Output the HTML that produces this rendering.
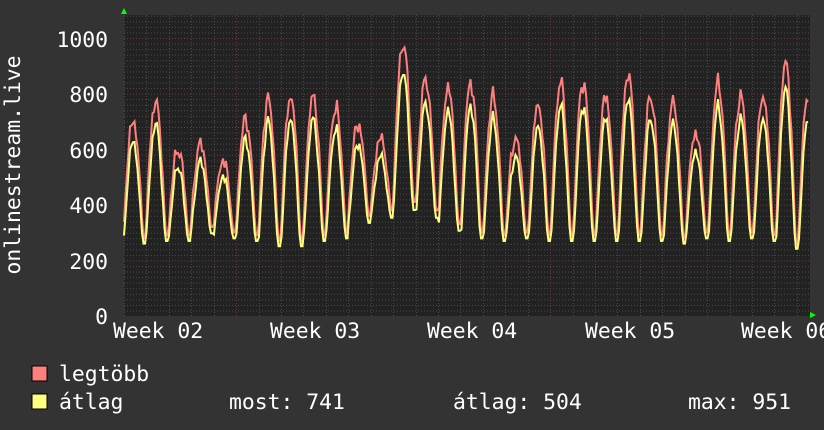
<!DOCTYPE html>
<html><head><meta charset="utf-8"><style>
body{margin:0;background:#333;width:824px;height:430px;overflow:hidden;font-family:"DejaVu Sans Mono","Liberation Mono",monospace;color:#fff}
svg{position:absolute;left:0;top:0}
</style></head><body>
<svg width="824" height="430" xmlns="http://www.w3.org/2000/svg" font-family="DejaVu Sans Mono, Liberation Mono, monospace">
<rect width="824" height="430" fill="#333"/>
<rect x="124" y="15" width="686" height="301" fill="#222"/>
<g id="grid"></g>
<g id="lines"></g>
<polygon points="121,14 127,14 124,8" fill="#0f0"/>
<polygon points="810,312 810,318 816,315" fill="#0f0"/>
<g fill="#fff" font-size="21.4" text-anchor="end">
<text x="108" y="47">1000</text><text x="108" y="102">800</text><text x="108" y="158">600</text>
<text x="108" y="213">400</text><text x="108" y="269">200</text><text x="108" y="324">0</text>
</g>
<g fill="#fff" font-size="21.4">
<text x="113" y="338">Week 02</text><text x="270" y="338">Week 03</text><text x="427" y="338">Week 04</text>
<text x="585" y="338">Week 05</text><text x="741" y="338">Week 06</text>
</g>
<text transform="translate(20,165) rotate(-90)" font-size="21.4" fill="#fff" text-anchor="middle">onlinestream.live</text>
<rect x="32" y="366" width="15" height="15" fill="#ff7f7f" stroke="#000"/>
<rect x="32" y="394" width="15" height="15" fill="#ffff7f" stroke="#000"/>
<g font-size="21.4" fill="#fff">
<text x="59" y="381">legtöbb</text>
<text x="59" y="409">átlag</text>
<text x="229" y="409">most: 741</text>
<text x="453" y="409">átlag: 504</text>
<text x="688" y="409">max: 951</text>
</g>
</svg>
<script>
var ns="http://www.w3.org/2000/svg";
var g=document.getElementById('grid'),L=document.getElementById('lines');
function line(x1,y1,x2,y2,c){var l=document.createElementNS(ns,'line');l.setAttribute('x1',x1);l.setAttribute('y1',y1);l.setAttribute('x2',x2);l.setAttribute('y2',y2);l.setAttribute('stroke',c);l.setAttribute('stroke-dasharray','1,2');g.appendChild(l);}
function Y(v){return 316-v*0.278;}
for(var v=20;v<=1080;v+=20){var y=Y(v);if(y<15)break;line(124,y+.5,810,y+.5,v%200==0?'#6a3a3a':'#4a4a4a');}
for(var x=124;x<810;x+=22.43){var d=Math.round((x-124)/22.43);line(Math.round(x)+.5,15,Math.round(x)+.5,316,(d%7==5)?'#6a3a3a':'#4a4a4a');}
var peaks=[700,770,600,620,560,710,780,790,790,750,690,640,980,850,820,840,790,640,760,840,840,790,870,790,770,660,840,790,790,910,800];
var troughs=[280,290,290,320,300,290,270,270,290,300,360,380,410,380,330,300,290,300,290,290,290,290,290,290,280,300,290,300,290,260,260];
var pm="",pa="";
for(var x=124;x<=808;x+=1.5){
 var t=(x-124)/22.5+0.03; var d=Math.floor(t),ph=t-d; if(ph<0){ph+=1;d-=1;}
 var di=Math.max(0,Math.min(d,30));
 var pk=peaks[di],tr=troughs[di];
 var f=Math.pow(Math.max(0,Math.sin(Math.PI*Math.min(1,ph*1.15))),0.9);
 var n=(Math.sin(x*1.7)+Math.sin(x*0.73)+Math.sin(x*3.1))*14;
 var vm=tr+(pk-tr)*f+n*f, va=tr*0.93+(pk*0.9-tr*0.93)*Math.pow(f,1.3)+n*0.7*f;
 pm+=x.toFixed(1)+","+Y(vm).toFixed(1)+" ";pa+=x.toFixed(1)+","+Y(va).toFixed(1)+" ";
}
function pl(p,c){var e=document.createElementNS(ns,'polyline');e.setAttribute('points',p);e.setAttribute('fill','none');e.setAttribute('stroke',c);e.setAttribute('stroke-width','2');L.appendChild(e);}
pl(pm,'#ff7f7f');pl(pa,'#ffff7f');
</script>
</body></html>
